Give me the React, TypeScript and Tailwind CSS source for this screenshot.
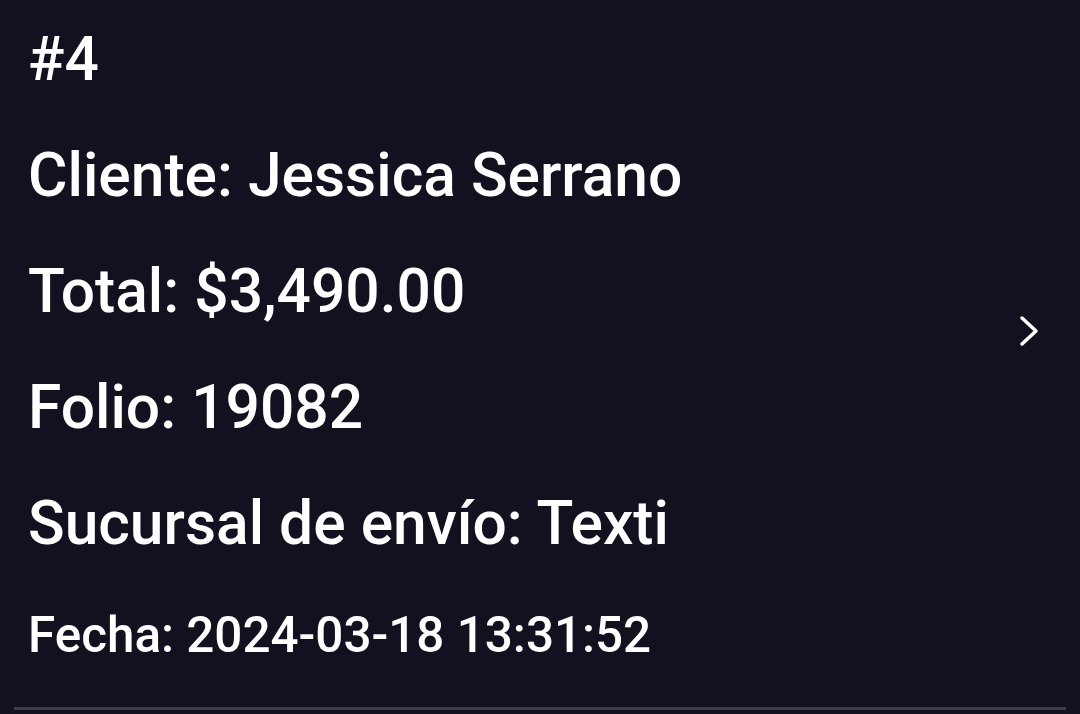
const rows = [
  "#4",
  "Cliente: Jessica Serrano",
  "Total: $3,490.00",
  "Folio: 19082",
  "Sucursal de envío: Texti",
];

export default function App() {
  return (
    <div
      className="min-h-[714px] w-full bg-[#11111f] text-white overflow-hidden"
      style={{ fontFamily: "Roboto, 'Noto Sans', sans-serif" }}
    >
      <div className="flex items-center pl-[28px] pr-[39px] pt-[2px]">
        <div className="flex-1 flex flex-col font-medium">
          {rows.map((r) => (
            <p key={r} className="text-[60.5px] leading-[116px] whitespace-nowrap">
              {r}
            </p>
          ))}
          <p className="text-[49.4px] leading-[106px] whitespace-nowrap">
            Fecha: 2024-03-18 13:31:52
          </p>
        </div>
        <svg width="22" height="32" viewBox="0 0 22 32" className="mb-[28px]">
          <polyline
            points="3,3 17,16 3,29"
            fill="none"
            stroke="white"
            strokeWidth="3.5"
            strokeLinecap="round"
            strokeLinejoin="round"
          />
        </svg>
      </div>
      <div className="mt-[19px] mx-[14px] h-[3px] bg-[#3a3a48]" />
    </div>
  );
}
